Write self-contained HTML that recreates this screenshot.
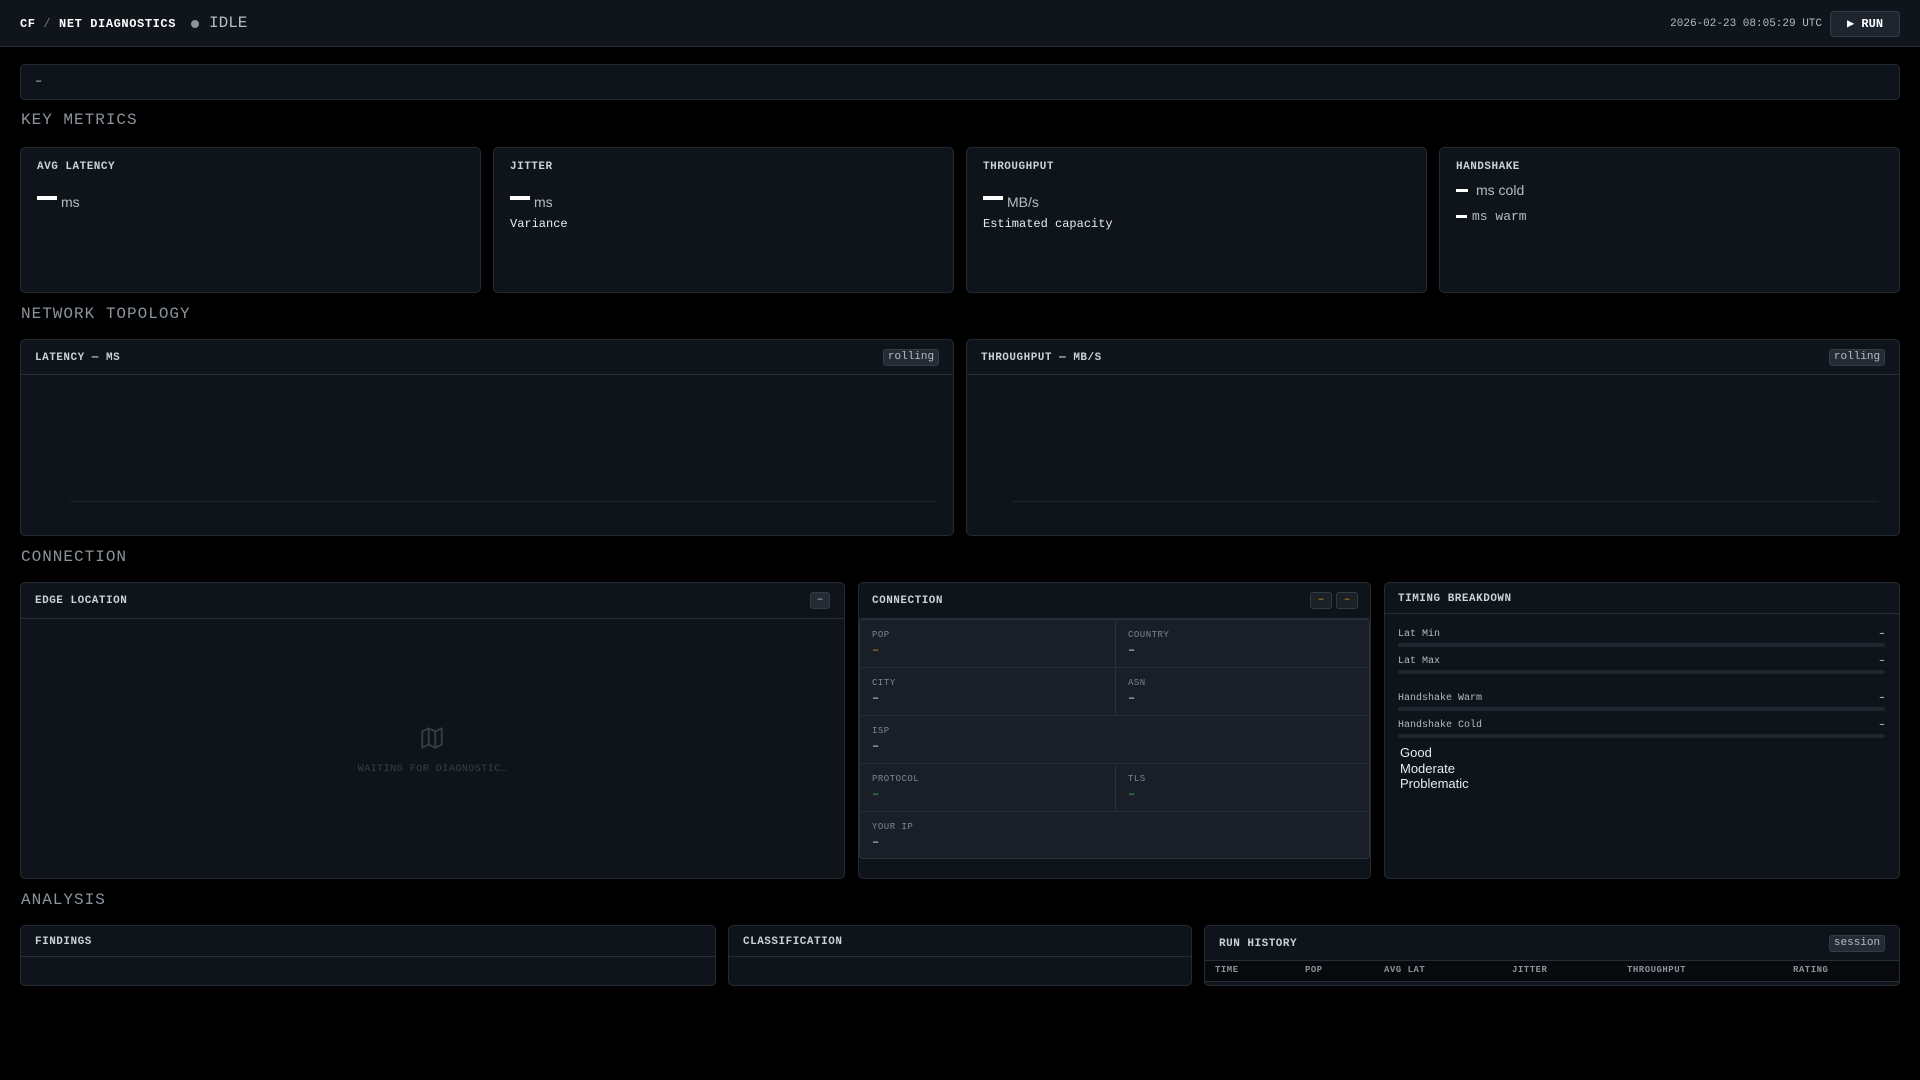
<!DOCTYPE html>
<html><head><meta charset="utf-8"><style>
*{margin:0;padding:0;box-sizing:border-box}
body{width:1920px;height:1080px;background:#000;position:relative;overflow:hidden;font-family:"Liberation Mono","DejaVu Sans Mono",monospace;color:#c9d1d9}
.a{position:absolute}
.p{position:absolute;background:#0f131a;border:1px solid #242b35;border-radius:5px}
.hl{position:absolute;left:0;right:0;height:1px;background:#262d38}
.sec{position:absolute;left:21px;font-size:16px;letter-spacing:1px;color:#8b949e}
.lbl{position:absolute;font-size:11px;font-weight:bold;letter-spacing:0.5px;color:#c9d1d9}
.dash{position:absolute;width:20px;height:4px;background:#fff}
.ms{position:absolute;font-family:"Liberation Sans","DejaVu Sans",sans-serif;font-size:14px;color:#b5bcc5}
.badge{position:absolute;background:#242b35;border:1px solid #333b46;border-radius:3px;font-size:11px;color:#b5bcc5;text-align:center}
.cl{position:absolute;font-size:9px;letter-spacing:0.5px;color:#7d8590}
.cv{position:absolute;font-size:12px;color:#e6edf3}
.bar{position:absolute;left:13px;width:487px;height:4px;background:#1f262f;border-radius:2px}
.tl{position:absolute;left:13px;font-size:10px;color:#b5bcc5}
.tv{position:absolute;right:14px;font-size:10px;color:#e6edf3}
.th{position:absolute;top:965px;font-size:9px;letter-spacing:0.5px;color:#8b949e;font-weight:bold}
</style></head><body>
<div class="a" style="left:0;top:0;width:1920px;height:47px;background:#10141b;border-bottom:1px solid #2a313b"></div>
<div class="a" style="left:20px;top:17px;font-size:12px;font-weight:bold;color:#fff;letter-spacing:0.6px">CF <span style="color:#6e7681;font-weight:normal">/</span> NET DIAGNOSTICS</div>
<div class="a" style="left:191px;top:20px;width:8px;height:8px;border-radius:50%;background:#8b949e"></div>
<div class="a" style="left:209px;top:14px;font-size:16px;color:#b5bcc5">IDLE</div>
<div class="a" style="right:98px;top:18px;font-size:11px;color:#b5bcc5">2026-02-23 08:05:29 UTC</div>
<div class="a" style="left:1830px;top:11px;width:70px;height:26px;background:#1f252e;border:1px solid #343c48;border-radius:4px;font-size:12px;font-weight:bold;color:#fff;text-align:center;line-height:24px">▶ RUN</div>

<div class="p" style="left:20px;top:64px;width:1880px;height:36px"><div class="a" style="left:14px;top:9px;font-size:12px;color:#c9d1d9">–</div></div>

<div class="sec" style="top:111px">KEY METRICS</div>
<div class="p" style="left:20px;top:147px;width:461px;height:146px"><div class="lbl" style="left:16px;top:13px">AVG LATENCY</div><div class="dash" style="left:16px;top:48px"></div><div class="ms" style="left:40px;top:46px">ms</div></div>
<div class="p" style="left:493px;top:147px;width:461px;height:146px"><div class="lbl" style="left:16px;top:13px">JITTER</div><div class="dash" style="left:16px;top:48px"></div><div class="ms" style="left:40px;top:46px">ms</div><div class="a" style="left:16px;top:69px;font-size:12px;color:#e6edf3">Variance</div></div>
<div class="p" style="left:966px;top:147px;width:461px;height:146px"><div class="lbl" style="left:16px;top:13px">THROUGHPUT</div><div class="dash" style="left:16px;top:48px"></div><div class="ms" style="left:40px;top:46px">MB/s</div><div class="a" style="left:16px;top:69px;font-size:12px;color:#e6edf3">Estimated capacity</div></div>
<div class="p" style="left:1439px;top:147px;width:461px;height:146px"><div class="lbl" style="left:16px;top:13px">HANDSHAKE</div><div class="dash" style="left:16px;top:41px;width:12px;height:3px"></div><div class="ms" style="left:36px;top:34px">ms cold</div><div class="dash" style="left:16px;top:67px;width:11px;height:3px"></div><div class="a" style="left:32px;top:61px;font-size:13px;color:#b5bcc5">ms warm</div></div>

<div class="sec" style="top:305px">NETWORK TOPOLOGY</div>
<div class="p" style="left:20px;top:339px;width:934px;height:197px"><div class="lbl" style="left:14px;top:12px">LATENCY — MS</div><div class="badge" style="left:862px;top:9px;width:56px;height:17px;line-height:15px">rolling</div><div class="hl" style="top:34px"></div><div class="a" style="left:49px;top:161px;width:866px;height:1px;background:#1e242d"></div></div>
<div class="p" style="left:966px;top:339px;width:934px;height:197px"><div class="lbl" style="left:14px;top:12px">THROUGHPUT — MB/S</div><div class="badge" style="left:862px;top:9px;width:56px;height:17px;line-height:15px">rolling</div><div class="hl" style="top:34px"></div><div class="a" style="left:45px;top:161px;width:866px;height:1px;background:#1e242d"></div></div>

<div class="sec" style="top:548px">CONNECTION</div>
<div class="p" style="left:20px;top:582px;width:825px;height:297px"><div class="lbl" style="left:14px;top:12px">EDGE LOCATION</div><div class="badge" style="left:789px;top:9px;width:20px;height:17px;line-height:15px">–</div><div class="hl" style="top:35px"></div>
<svg class="a" style="left:398px;top:142px" width="26" height="26" viewBox="0 0 24 24" fill="none" stroke="#3a4049" stroke-width="1.6" stroke-linejoin="round"><path d="M3 6l6-3 6 3 6-3v15l-6 3-6-3-6 3z M9 3v15 M15 6v15"/></svg>
<div class="a" style="left:0;width:823px;top:181px;text-align:center;font-size:10px;letter-spacing:0.5px;color:#3a4049">WAITING FOR DIAGNOSTIC…</div></div>

<div class="p" style="left:858px;top:582px;width:513px;height:297px"><div class="lbl" style="left:13px;top:12px">CONNECTION</div>
<div class="badge" style="left:451px;top:9px;width:22px;height:17px;line-height:15px;color:#d29922;background:#1c2027">–</div><div class="badge" style="left:477px;top:9px;width:22px;height:17px;line-height:15px;color:#d29922;background:#1c2027">–</div>
<div class="hl" style="top:35px"></div>
<div class="a" style="left:0;top:36px;width:511px;height:240px;background:#1a1f27;border:1px solid #2a313b;border-radius:4px;overflow:hidden">
<div class="a" style="left:255px;top:0;width:1px;height:96px;background:#2a313b"></div>
<div class="a" style="left:255px;top:144px;width:1px;height:48px;background:#2a313b"></div>
<div class="hl" style="top:47px"></div><div class="hl" style="top:95px"></div><div class="hl" style="top:143px"></div><div class="hl" style="top:191px"></div>
<div class="cl" style="left:12px;top:10px">POP</div><div class="cv" style="left:12px;top:23px;color:#d29922">–</div>
<div class="cl" style="left:268px;top:10px">COUNTRY</div><div class="cv" style="left:268px;top:23px">–</div>
<div class="cl" style="left:12px;top:58px">CITY</div><div class="cv" style="left:12px;top:71px">–</div>
<div class="cl" style="left:268px;top:58px">ASN</div><div class="cv" style="left:268px;top:71px">–</div>
<div class="cl" style="left:12px;top:106px">ISP</div><div class="cv" style="left:12px;top:119px">–</div>
<div class="cl" style="left:12px;top:154px">PROTOCOL</div><div class="cv" style="left:12px;top:167px;color:#3fb950">–</div>
<div class="cl" style="left:268px;top:154px">TLS</div><div class="cv" style="left:268px;top:167px;color:#3fb950">–</div>
<div class="cl" style="left:12px;top:202px">YOUR IP</div><div class="cv" style="left:12px;top:215px">–</div>
</div></div>

<div class="p" style="left:1384px;top:582px;width:516px;height:297px"><div class="lbl" style="left:13px;top:10px">TIMING BREAKDOWN</div><div class="hl" style="top:30px"></div>
<div class="tl" style="top:46px">Lat Min</div><div class="tv" style="top:46px">–</div><div class="bar" style="top:60px"></div>
<div class="tl" style="top:73px">Lat Max</div><div class="tv" style="top:73px">–</div><div class="bar" style="top:87px"></div>
<div class="tl" style="top:110px">Handshake Warm</div><div class="tv" style="top:110px">–</div><div class="bar" style="top:124px"></div>
<div class="tl" style="top:137px">Handshake Cold</div><div class="tv" style="top:137px">–</div><div class="bar" style="top:151px"></div>
<div class="a" style="left:15px;top:162px;font-family:'Liberation Sans','DejaVu Sans',sans-serif;font-size:13px;line-height:15.5px;color:#e6edf3">Good<br>Moderate<br>Problematic</div></div>

<div class="sec" style="top:891px">ANALYSIS</div>
<div class="p" style="left:20px;top:925px;width:696px;height:61px"><div class="lbl" style="left:14px;top:10px">FINDINGS</div><div class="hl" style="top:30px"></div></div>
<div class="p" style="left:728px;top:925px;width:464px;height:61px"><div class="lbl" style="left:14px;top:10px">CLASSIFICATION</div><div class="hl" style="top:30px"></div></div>
<div class="p" style="left:1204px;top:925px;width:696px;height:61px"><div class="lbl" style="left:14px;top:12px">RUN HISTORY</div><div class="badge" style="left:624px;top:9px;width:56px;height:17px;line-height:15px">session</div><div class="hl" style="top:34px"></div>
<div class="a" style="left:0;top:35px;width:694px;height:20px;background:#07090c"></div><div class="hl" style="top:55px"></div></div>
<div class="th" style="left:1215px">TIME</div><div class="th" style="left:1305px">POP</div><div class="th" style="left:1384px">AVG LAT</div><div class="th" style="left:1512px">JITTER</div><div class="th" style="left:1627px">THROUGHPUT</div><div class="th" style="left:1793px">RATING</div>
</body></html>
